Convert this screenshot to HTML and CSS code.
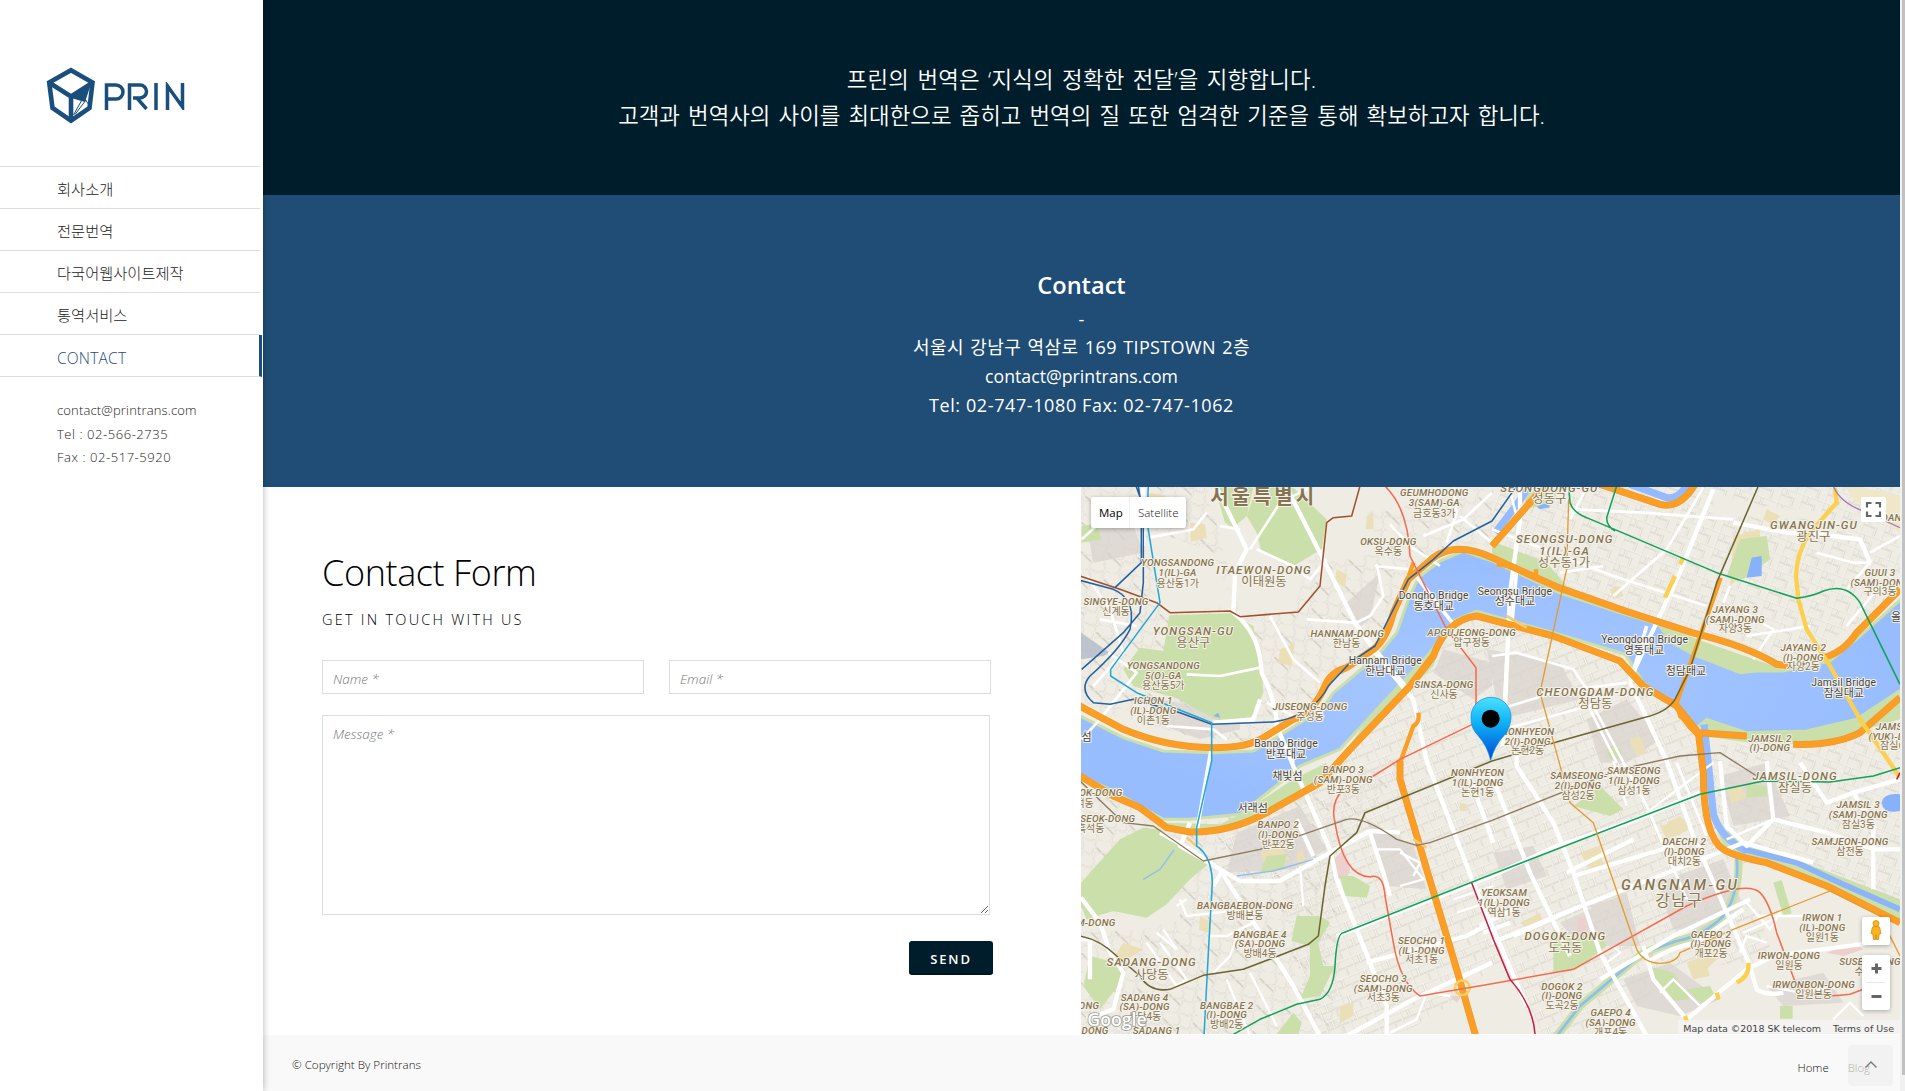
FILE: index.html
```html
<!DOCTYPE html>
<html lang="ko">
<head>
<meta charset="utf-8">
<title>PRIN - Contact</title>
<link rel="stylesheet" href="styles.css">
</head>
<body>
<div class="page">
<aside class="sidebar">
  <a class="logo" href="#">
    <svg width="50" height="58" viewBox="0 0 50 58" fill="none" stroke="#1a4e7c" stroke-width="4.6" stroke-linejoin="miter">
      <path d="M25 3.2L46.5 15.5L43.5 41L25 53.6L6.500 41L3.200 15.500Z"/>
      <path d="M3 15.500L25 29.500L47 15.500M25 29V54"/>
      <path d="M25 29L45 17L39 35L25 31Z" fill="#1a4e7c" stroke="none"/>
      <path d="M37 31L27.500 48M40 33L29 47.500M39 32l4 6" stroke-width="1"/>
    </svg>
    <svg class="wordmark" width="82" height="28" viewBox="0 0 82 28" fill="none" stroke="#1a4e7c" stroke-width="3.5">
      <path d="M2.500 28V3H12a7 7 0 0 1 0 14H3M25.500 28V3H36a6.500 6.500 0 0 1 0 13H29M33 16L42.500 27M52 1V28M63.500 28V4L78.500 25V1"/>
    </svg>
  </a>
  <nav class="menu">
    <a href="#">회사소개</a>
    <a href="#">전문번역</a>
    <a href="#">다국어웹사이트제작</a>
    <a href="#">통역서비스</a>
    <a href="#" class="active">CONTACT</a>
  </nav>
  <div class="side-info"><p class="mail">contact@printrans.com</p><p>Tel : 02-566-2735</p><p>Fax : 02-517-5920</p></div>
</aside>
<main class="content">
  <section class="hero">
    <p class="h1">프린의 번역은 ‘지식의 정확한 전달’을 지향합니다.</p>
    <p class="h2">고객과 번역사의 사이를 최대한으로 좁히고 번역의 질 또한 엄격한 기준을 통해 확보하고자 합니다.</p>
  </section>
  <section class="contact">
    <h2>Contact</h2>
    <p class="dash">-</p>
    <p class="addr">서울시 강남구 역삼로 169 TIPSTOWN 2층</p>
    <p class="email">contact@printrans.com</p>
    <p class="tel">Tel: 02-747-1080 Fax: 02-747-1062</p>
  </section>
  <section class="split">
    <form class="form">
      <h3>Contact Form</h3>
      <p class="sub">GET IN TOUCH WITH US</p>
      <div class="row"><input type="text" placeholder="Name *"><input type="text" placeholder="Email *"></div>
      <textarea placeholder="Message *"></textarea>
      <button type="button">SEND</button>
    </form>
    <div class="map">
      <svg class="canvas" width="819" height="547" viewBox="3 3 2457 1641">
        <defs>
          <pattern id="gs" width="74" height="52" patternUnits="userSpaceOnUse" patternTransform="rotate(-22)"><path d="M0 1H74M0 26H74M1 0V52M25 0V26M50 26V52" stroke="#cbc5b9" stroke-width="5.500" fill="none"/><path d="M0 1H74M0 26H74M1 0V52M25 0V26M50 26V52" stroke="#fbfaf6" stroke-width="2.800" fill="none"/></pattern>
          <pattern id="gn" width="66" height="48" patternUnits="userSpaceOnUse" patternTransform="rotate(20)"><path d="M0 1H66M0 24H40M1 0V48M22 0V24M44 20V48" stroke="#cbc5b9" stroke-width="5.500" fill="none"/><path d="M0 1H66M0 24H40M1 0V48M22 0V24M44 20V48" stroke="#fbfaf6" stroke-width="2.800" fill="none"/></pattern>
          <pattern id="gw" width="90" height="80" patternUnits="userSpaceOnUse" patternTransform="rotate(8)"><path d="M0 10Q40 -8 90 10M0 50Q50 30 90 50M20 0Q5 40 20 80M60 0Q80 40 60 80M20 28L64 60" stroke="#d0cabe" stroke-width="4.500" fill="none"/><path d="M0 10Q40 -8 90 10M0 50Q50 30 90 50M20 0Q5 40 20 80M60 0Q80 40 60 80" stroke="#faf9f5" stroke-width="2.500" fill="none"/></pattern>
          <linearGradient id="pin" x1="0" y1="0" x2="0" y2="1"><stop offset="0" stop-color="#4be0ff"/><stop offset=".4" stop-color="#0fb2f5"/><stop offset="1" stop-color="#0048d8"/></linearGradient>
          <radialGradient id="wat"><stop offset="0" stop-color="#a6c8ff"/><stop offset="1" stop-color="#98bdff"/></radialGradient>
        </defs>
        <rect width="2460" height="1650" fill="#efece4"/>
        <!-- street grids -->
        <path fill="url(#gw)" d="M0 0H380L480 380L640 380L720 100L980 60L1236 0V180L1100 180L960 300L880 490L540 770L330 750L0 660ZM0 900L300 1030L1000 800L760 1120L800 1650H0Z"/>
        <path fill="url(#gn)" d="M1236 0H2460V330L2130 540L1236 230ZM1860 1560L1900 780L2460 700V1280L1900 1080Z"/>
        <path fill="url(#gs)" d="M420 1030L780 830L1160 400L1640 500L1850 740L1880 1020L2000 1110L2080 1420L1800 1450L1560 1650H700L600 1200L430 1190Z"/>
        <path fill="#efece4" d="M1236 1440L1150 1530L960 1650H1236L1380 1645L1290 1480ZM0 1250L100 1290L300 1230L300 1300L190 1330L0 1340ZM210 130L400 200L460 360L270 380L230 340ZM720 100L860 60L900 200L740 230ZM1900 20L2050 60L2240 80L2220 100L1900 90ZM1930 1130L2200 1180L2350 1290L2000 1260Z"/>
        <!-- dense blocks -->
        <g fill="#d9d3ce" opacity=".7">
          <path d="M240 640L480 690V730L360 760L200 700ZM20 120L150 90L190 200L40 230ZM800 350L900 260L870 400L830 430ZM1090 490L1236 530V600L1180 640L1060 560Z"/>
          <path d="M470 1040L660 960L740 1090L640 1150L440 1160ZM1220 490L1440 530L1500 640L1260 700ZM1520 700L1640 640L1740 760L1640 830L1560 830ZM1440 1310L1640 1220L1680 1380L1500 1380ZM1530 1260L1630 1230L1650 1300L1560 1320ZM1730 1190L1930 1120L1990 1260L1880 1330L1780 1330ZM860 1000L1000 1080L1040 1210L920 1200Z"/>
          <path d="M1920 870L2060 830L2130 990L1960 1020ZM2060 1500L2230 1460L2290 1550L2110 1560ZM1240 1100L1360 1080L1400 1170L1280 1210ZM1630 1480L1770 1430L1920 1540L1800 1590L1670 1560ZM1280 290L1430 260L1460 320L1340 310Z"/>
        </g>
        <!-- amenities -->
        <g fill="#eadfb7">
          <path d="M330 110l45 5 5 40-48 12zM210 20l50 10-20 45-40-20zM600 490l45-20-10 70-40-10zM860 90l20-10v50l-22 0zM770 250l30 15-5 40-30-20zM90 1430l40-60 60 20-80 50zM360 1290l30 15-5 35-28-8zM540 1100l60-20 30 40-70 20zM650 1100l20-5 5 40-22 2zM1760 1010l40-20 30 30-35 30zM1500 1100l60-20 10 60-40 10zM1740 1020l50-15 20 35-50 20zM1820 1430l50-20 20 60-50 10zM1940 910l40-15 20 40-45 15zM1960 150l80-20 0 90-90 80zM1830 1360l80-10 0 70-40 40zM1650 760l30-10 20 50-30 10zM1590 310l30-10 10 30-30 10zM1140 950l20 5v20h-20zM1320 1310l60-30 10 30-40 30zM780 1560l40-10v40l-40 20zM2060 70l40 20-20 30-30-20z"/>
        </g>
        <g fill="#ecd0cd"><path d="M763 1120L790 1090L810 1140L800 1190L765 1170ZM1490 1300l25-8 5 60-25 8zM1690 1390l25-8 5 30-25 8zM2240 1400l80-30 30 20-60 20zM1110 1530h35l-15 20z"/></g>
        <!-- parks -->
        <g fill="#cadfa9">
          <path d="M530 5H640L740 100L725 190L640 240L545 200L530 140L500 90ZM405 5H520L500 90L460 125L435 110ZM268 388L450 382L520 420L545 540L550 620L520 690L430 710L330 660L300 640L160 600L130 550L180 485L250 495ZM5 120L50 115L65 160L5 170Z"/>
          <path d="M3 1190L120 1060L190 1025L240 1030L330 1090L390 1130L330 1180L260 1255L200 1295L100 1275L20 1300L3 1260ZM650 1290L720 1290L750 1310L715 1370L730 1440L765 1440L720 1530L660 1540L690 1470L690 1380L635 1365ZM780 1170L820 1170L870 1200L860 1235L795 1230ZM30 1410L110 1430L130 1480L60 1570L10 1500ZM590 1644L640 1580L665 1610L655 1644Z"/>
          <path d="M1236 165L1400 230L1460 300L1300 270L1236 235ZM1330 20L1440 5L1410 60L1340 65ZM1700 400L1800 440L1880 470L2110 550L1990 560L1850 510L1760 470ZM1875 700L2010 730L2200 735L2460 620V700L2200 775L2010 770L1870 750ZM1480 960L1560 900L1630 970L1590 990ZM1980 160L2060 150L2070 220L1990 280L1940 270ZM1420 1330L1480 1360L1560 1340L1580 1380L1490 1450L1420 1460ZM1700 1440L1780 1460L1830 1540L1770 1545L1730 1490ZM1820 1510L1890 1500L1910 1540L1860 1550ZM1910 1025L1940 1035L2000 1080L2120 1110L2460 1240V1310L2260 1200L2000 1120L1930 1080ZM2000 895L2060 900L2060 930L2000 935ZM2080 1190l25-8 30 100-25 8zM2100 1560h38v38h-38zM560 1110L620 1105L610 1150L540 1160ZM1590 780q30 0 35 20t-30 20q-25-20-5-40zM1015 500L1100 430L1060 540L990 610L820 790L780 815Z"/>
        </g>
        <path fill="#efe7c8" d="M2290 -10L2460 30V140L2320 40Z"/>
        <!-- green river banks and water -->
        <path fill="#cadfa9" d="M250 1010L420 1015L480 985L640 880L740 830L720 880L500 1020L330 1040ZM1880 490L2050 560L2110 570L1980 570L1870 520Z"/>
        <path fill="url(#wat)" stroke="#cadfa9" stroke-width="9" d="M-20 680L130 755L250 795L400 800L520 795L590 755L660 710L725 670L760 620L820 570L900 500L950 440L985 340L1015 275L1080 225L1150 195L1236 225L1436 320L1636 385L1736 415L1760 450L1850 510L1990 555L2110 555L2250 525L2340 450L2480 325V600L2330 700L2180 735L2000 740L1880 700L1850 725L1780 655L1690 590L1636 505L1440 445L1240 390L1190 375L1120 405L1050 500L900 660L780 790L660 840L600 890L480 985L330 1000L250 1000L180 960L100 915L-20 860Z"/>
        <path fill="none" stroke="#94bbff" stroke-width="22" d="M1246 140L1315 50L1350 -5M1650 -5L1760 35Q1800 40 1820 -5M1872 715L1884 825L1900 985Q1925 1060 2000 1095"/>
        <path fill="none" stroke="#8bb4fb" stroke-width="17" d="M1990 1090L2150 1130L2290 1195L2460 1270"/>
        <path fill="none" stroke="#c8dfa8" stroke-width="24" d="M1975 1120Q1980 1220 1930 1290Q1870 1350 1790 1365L1690 1400L1500 1560L1430 1650"/>
        <path fill="none" stroke="#8fbdf0" stroke-width="8" d="M1970 1115Q1980 1220 1930 1290Q1870 1350 1790 1365L1690 1400L1500 1560L1430 1650"/>
        <path fill="none" stroke="#8fbdf0" stroke-width="4" d="M190 1180L240 1150L282 1092M470 1170L580 1155L700 1120"/>
        <path fill="#87b1fb" d="M2015 215L2045 210V270L2000 275ZM2405 950Q2410 920 2460 925V975Q2410 985 2405 950ZM1370 62L1400 50L1410 64L1380 70ZM400 690L415 680L420 695Z"/>
        <path fill="#cadfa9" d="M1730 450L1900 505L2110 550L1980 565L1840 510Z"/>
        <path fill="#a9b4c4" opacity=".7" d="M3 440L90 500L70 510L3 520Z"/>
        <!-- white arterial roads -->
        <g fill="none" stroke="#fff" stroke-width="8" stroke-linejoin="round">
          <path d="M5 160L60 110L165 70M20 270L90 370L130 500L40 600M60 400L170 420M85 500L170 560L60 700L5 760M205 155L340 130L380 80M480 130L420 120M510 190L600 50L690 5M530 190L640 240L690 280L740 220M320 565L420 570L540 545M570 390L640 520L720 590M560 650L640 690M930 115L990 180L1080 240M1120 5L1130 80L1100 170M885 240L990 250M890 235L910 330L870 390L830 410M820 410L680 400M1030 150L1150 100L1236 20M260 720L400 730L440 760M1236 170L1140 90"/>
          <path d="M1236 130L1600 270L1880 360M1460 90L1480 70L1690 80L1960 100M1600 330L1760 190L1870 5M1520 5L1470 100M1280 -20L1310 90M1440 260L1570 240M2000 450L2190 420M1950 300L1930 350M2210 200L2320 230L2370 230L2300 310M2020 520L2080 430L1990 380M2370 200L2460 150M2300 420L2400 300"/>
          <path d="M1236 510L1310 500L1480 550L1520 610M1236 680L1290 660L1420 620L1640 590M1540 660L1700 960L1820 1240M1280 500L1270 690M1500 610L1610 830M1236 740L1560 650M1790 830L1880 1050"/>
        </g>
        <g fill="none" stroke="#fff" stroke-width="13" stroke-linejoin="round">
          <path d="M410 5L500 190L465 260L460 380M620 5L740 240L820 400L900 520L1000 640L1040 825L1180 1190L1340 1560M460 380Q540 440 545 560Q590 650 590 720L640 840L750 1090M540 640L520 700L400 710M190 5V180M1320 0V100L1290 320L1270 780M1650 590L1760 825L1840 1050L2010 1440L2030 1510Q2060 1530 2110 1520M1900 10L1800 260L1650 580M1960 110L2120 140L2260 150L2340 160L2370 230"/>
          <path d="M240 1040L330 1090L420 1150L480 1185H600L750 1100L870 1035L960 1040M420 1150L540 1340L640 1500L720 1650M870 1040L910 1160L930 1230M750 1090L770 1180L870 1430L920 1560V1650M800 1650L1000 1540L1236 1430M770 1350L1236 1170L1430 1080L1670 1000L1860 920M860 1430L1160 1350L1236 1310M1236 1370L1480 1270L1840 1130L1990 1070L2200 1130M330 1010L300 1080L420 1150M650 1000L700 1110M400 1200L430 1150"/>
          <path d="M1310 800V840L1420 1010L1480 1160L1560 1400L1700 1650M1236 870L1350 1160L1470 1410M1480 1170L1780 1080M1560 1480L1780 1350L2010 1240M1700 1430Q1780 1380 1850 1370L1990 1270M1690 1380L1720 1480L1820 1600L2000 1450M1920 825L1940 1020L2000 1080L2080 1000L2060 825M2080 1000L2240 1040L2380 1090L2460 1090M2160 830L2240 950L2320 920L2460 880M2320 920L2380 1020V1210M1200 1320L1300 1270M1210 1340L1290 1310M3 1235L60 1310L90 1400L130 1460L100 1570L20 1600M3 1360H30V1480M1160 850L1240 1070M2380 1370L2080 1410L2000 1450M1460 1160L1660 1060M1480 1270L1300 1350"/>
        </g>
        <g fill="none" stroke="#fff" stroke-width="7">
          <path d="M300 1240L320 1290L500 1270L540 1290M320 1240L290 1260M230 1340L290 1390L250 1330M200 1370L290 1500L320 1480L240 1370M390 1350H440L520 1310M400 1460L450 1410L480 1330M440 1480L510 1650M510 1460L590 1620M660 1140L670 1260M880 1090L960 1090L1030 1180L960 1200M960 1100L1020 1130L1000 1170M1120 1240L1240 1200M1130 1280L1250 1240M1900 830L1700 980M1940 1060L2080 1000M1640 960L1600 825M1580 1430L1620 1400L1600 1380M1740 1520L1780 1480L1860 1560M2000 1250L2070 1330L2100 1280M1990 1340L2080 1300M2030 1290L2200 1290M1980 1400L2000 1350L2060 1370M2060 1500L2160 1520L2290 1500M2260 1600L2310 1550L2350 1590M930 1640L1010 1600L1040 1520L1110 1530"/>
        </g>
        <!-- bridges -->
        <g fill="none" stroke="#fff" stroke-width="11"><path d="M640 830L590 720M820 410L985 610M1000 260L1140 440M1310 250L1295 420M1700 420L1650 590M395 780L350 1040"/></g>
        <!-- highways -->
        <path fill="none" stroke="#f1982a" stroke-width="21" stroke-linejoin="round" d="M-5 658L130 730Q260 785 400 785Q500 785 550 755L640 700Q700 680 735 600Q750 560 800 545L880 490Q920 460 940 380L985 280L1060 215Q1130 165 1236 215L1436 305L1636 375L1836 440Q2000 480 2090 535L2130 540M2230 515Q2290 500 2330 440L2460 310M-5 867L100 930L180 965L260 1025L330 1038Q450 1040 560 980L720 890L810 790L990 600L1060 510Q1100 400 1190 390L1420 450L1620 525L1690 600L1790 660L1855 740L2000 750M2140 775Q2260 780 2340 740L2460 635M1855 740L1870 860Q1870 1050 1930 1090Q1960 1110 2060 1130L2240 1200L2460 1310M960 825V880L1040 1150L1130 1450L1190 1660M1236 180L1350 50L1400 -5M1560 -5L1740 55Q1800 70 1845 -5"/>
        <path fill="none" stroke="#fa9e25" stroke-width="17" stroke-linejoin="round" d="M-5 658L130 730Q260 785 400 785Q500 785 550 755L640 700Q700 680 735 600Q750 560 800 545L880 490Q920 460 940 380L985 280L1060 215Q1130 165 1236 215L1436 305L1636 375L1836 440Q2000 480 2090 535L2130 540M2230 515Q2290 500 2330 440L2460 310M-5 867L100 930L180 965L260 1025L330 1038Q450 1040 560 980L720 890L810 790L990 600L1060 510Q1100 400 1190 390L1420 450L1620 525L1690 600L1790 660L1855 740L2000 750M2140 775Q2260 780 2340 740L2460 635M1855 740L1870 860Q1870 1050 1930 1090Q1960 1110 2060 1130L2240 1200L2460 1310M960 825V880L1040 1150L1130 1450L1190 1660M1236 180L1350 50L1400 -5M1560 -5L1740 55Q1800 70 1845 -5"/>
        <path fill="none" stroke="#fa9e25" stroke-width="13" d="M1922 275L1850 480L1790 650L1800 690L1855 740M1780 640Q1800 700 1850 745M980 290L1000 230M770 550L730 620M1250 235L1310 243M1368 250V275M1015 680Q1020 710 1000 720L960 830"/>
        <g fill="none" stroke="#fcd04f" stroke-width="13"><path d="M2265 5L2270 50L2190 140Q2150 200 2148 270L2155 340L2180 430L2250 540L2340 700L2430 830L2460 875M1785 270L1755 335M1810 215L1800 235M2005 1430Q2010 1470 1970 1490M1910 1520L1916 1540M1815 1590L1822 1610"/></g>
        <circle cx="1147" cy="1505" r="22" fill="none" stroke="#f8ce69" stroke-width="8"/>
        <path fill="none" stroke="#f5cb75" stroke-width="8" d="M1000 1060L1040 1085M320 1055L350 1080M1280 390L1340 425"/>
        <!-- subway lines -->
        <g fill="none" stroke-width="4.600" stroke-linejoin="round">
          <path stroke="#a0522d" d="M0 270L120 310L230 350L270 380L450 375L480 392L655 378L720 300L740 110L760 95L815 90L840 0"/>
          <path stroke="#2461a0" d="M168 0L190 60V290L180 380L130 440L5 550M175 0L184 60V230L105 305M0 283L100 310Q170 340 150 430Q120 490 30 570Q-5 610 40 650L90 655L160 640L300 680L395 715L580 708Q700 690 745 600L810 530L885 480L950 350L985 280L1060 220L1120 165L1236 105L1310 0"/>
          <path stroke="#23a7d6" d="M205 0L200 100L240 350L92 550V570L170 620L395 710V825L350 1025V1080Q395 1110 397 1190L385 1400L372 1650"/>
          <path stroke="#f36c4f" d="M915 0Q985 70 990 210L1100 430L1188 545V710L960 820L880 870L790 910Q750 950 765 1010Q790 1170 870 1173Q910 1160 915 1230L940 1370Q960 1490 1020 1530L1236 1493L1480 1450L1820 1260Q2000 1180 2040 1220Q2070 1250 2090 1340L2150 1500Q2200 1540 2310 1525L2350 1510"/>
          <path stroke="#12a05b" d="M1466 0L1470 50Q1480 80 1520 95L1910 260L2150 337Q2200 330 2230 315Q2300 290 2340 350L2460 595M1610 0L1580 95Q1580 120 1605 135M460 1645L540 1600L650 1555L720 1540Q760 1520 765 1440Q770 1340 790 1340L1236 1165L1480 1070L1860 925L2050 885L2250 888L2380 870L2460 845"/>
          <path stroke="#6b6530" d="M2035 0L1910 290L1830 550L1785 640Q1760 680 1690 695L1440 765L1236 825L855 980L830 1040L750 1110L735 1200L715 1350L685 1375L490 1450L370 1468L270 1510Q210 1520 180 1470L110 1410Q60 1360 0 1350"/>
          <path stroke="#8c7a60" stroke-width="4" d="M0 885L130 1010L220 1020L370 1125L540 1090L800 1000Q850 990 950 1060L1010 1078L1050 1070L1236 1003L1620 850L1800 810L1920 800L2030 870"/>
          <path stroke="#c51f49" d="M1175 1190L1240 1360L1290 1480Q1360 1560 1365 1645M2460 860L2450 880"/>
          <path stroke="#e49a31" stroke-width="4" d="M1466 40L1460 250L1380 620L1435 820L1470 950L1540 1010L1670 1390Q1690 1430 1740 1432Q1790 1430 1800 1400L1960 1330L2250 1215L2400 1290L2460 1410"/>
          <path stroke="#a57ab9" stroke-width="4" d="M2260 0Q2280 50 2350 75L2460 125"/>
        </g>
        <!-- place labels -->
        <g class="lbl">
          <text x="1063" y="31">GEUMHODONG</text><text x="1063" y="61">3(SAM)-GA</text><text class="k" x="1063" y="92">금호동3가</text>
          <text x="925" y="178">OKSU-DONG</text><text class="k" x="925" y="208">옥수동</text>
          <text x="293" y="241">YONGSANDONG</text><text x="293" y="271">1(IL)-GA</text><text class="k" x="293" y="302">용산동1가</text>
          <text x="108" y="358">SINGYE-DONG</text><text class="k" x="108" y="388">신계동</text>
          <text x="250" y="549">YONGSANDONG</text><text x="250" y="579">5(O)-GA</text><text class="k" x="250" y="610">용산동5가</text>
          <text x="220" y="655">ICHON 1</text><text x="220" y="685">(IL)-DONG</text><text class="k" x="220" y="714">이촌1동</text>
          <text x="690" y="672">JUSEONG-DONG</text><text class="k" x="690" y="703">주성동</text>
          <text x="802" y="453">HANNAM-DONG</text><text class="k" x="800" y="483">한남동</text>
          <text x="1175" y="451">APGUJEONG-DONG</text><text class="k" x="1175" y="481">압구정동</text>
          <text x="1092" y="607">SINSA-DONG</text><text class="k" x="1092" y="637">신사동</text>
          <text x="1343" y="746">NONHYEON</text><text x="1343" y="776">2(I)-DONG</text><text class="k" x="1343" y="805">논현2동</text>
          <text x="1966" y="380">JAYANG 3</text><text x="1966" y="410">(SAM)-DONG</text><text class="k" x="1966" y="439">자양3동</text>
          <text x="2170" y="494">JAYANG 2</text><text x="2170" y="524">(I)-DONG</text><text class="k" x="2170" y="553">자양2동</text>
          <text x="2400" y="269">GUUI 3</text><text x="2400" y="299">(SAM)-DONG</text><text class="k" x="2400" y="328">구의3동</text>
          <text x="2070" y="767">JAMSIL 2</text><text x="2070" y="796">(I)-DONG</text><text x="2440" y="731">JAMSIL</text><text x="2450" y="761">(YUK)-DONG</text><text class="k" x="2450" y="788">잠실6동</text><text x="2445" y="106">DANG</text>
          <text x="790" y="862">BANPO 3</text><text x="790" y="892">(SAM)-DONG</text><text class="k" x="790" y="921">반포3동</text>
          <text x="595" y="1027">BANPO 2</text><text x="595" y="1057">(I)-DONG</text><text class="k" x="595" y="1086">반포2동</text>
          <text x="45" y="931">SEOK-DONG</text><text class="k" x="0" y="962">흑석동</text><text x="45" y="1008">HEUKSEOK-DONG</text><text class="k" x="32" y="1039">흑석동</text>
          <text x="1193" y="871">NONHYEON</text><text x="1193" y="901">1(IL)-DONG</text><text class="k" x="1193" y="930">논현1동</text>
          <text x="495" y="1270">BANGBAEBON-DONG</text><text class="k" x="495" y="1299">방배본동</text>
          <text x="540" y="1355">BANGBAE 4</text><text x="540" y="1384">(SA)-DONG</text><text class="k" x="540" y="1413">방배4동</text>
          <text x="440" y="1568">BANGBAE 2</text><text x="440" y="1597">(I)-DONG</text><text class="k" x="440" y="1626">방배2동</text>
          <text x="194" y="1544">SADANG 4</text><text x="194" y="1573">(SA)-DONG</text><text class="k" x="194" y="1603">사당4동</text><text x="230" y="1644">SADANG 1</text>
          <text x="27" y="1321">NAM-DONG</text><text x="17" y="1568">DONG</text><text x="45" y="1644">DONG</text>
          <text x="1025" y="1375">SEOCHO 1</text><text x="1025" y="1404">(IL)-DONG</text><text class="k" x="1025" y="1432">서초1동</text>
          <text x="910" y="1487">SEOCHO 3</text><text x="910" y="1517">(SAM)-DONG</text><text class="k" x="910" y="1545">서초3동</text>
          <text x="1272" y="1231">YEOKSAM</text><text x="1272" y="1261">1(IL)-DONG</text><text class="k" x="1272" y="1291">역삼1동</text>
          <text x="1496" y="880">SAMSEONG-</text><text x="1494" y="910">2(I)-DONG</text><text class="k" x="1494" y="940">삼성2동</text>
          <text x="1662" y="865">SAMSEONG</text><text x="1662" y="895">1(IL)-DONG</text><text class="k" x="1662" y="925">삼성1동</text>
          <text x="1813" y="1078">DAECHI 2</text><text x="1813" y="1108">(I)-DONG</text><text class="k" x="1813" y="1137">대치2동</text>
          <text x="2335" y="967">JAMSIL 3</text><text x="2335" y="997">(SAM)-DONG</text><text class="k" x="2335" y="1026">잠실3동</text>
          <text x="2310" y="1078">SAMJEON-DONG</text><text class="k" x="2310" y="1108">삼전동</text>
          <text x="2227" y="1306">IRWON 1</text><text x="2227" y="1336">(IL)-DONG</text><text class="k" x="2227" y="1365">일원1동</text>
          <text x="2127" y="1420">IRWON-DONG</text><text class="k" x="2127" y="1450">일원동</text>
          <text x="2201" y="1507">IRWONBON-DONG</text><text class="k" x="2201" y="1536">일원본동</text>
          <text x="2370" y="1438">SUSEO-DONG</text><text class="k" x="2365" y="1467">수서동</text>
          <text x="1893" y="1355">GAEPO 2</text><text x="1893" y="1384">(I)-DONG</text><text class="k" x="1893" y="1413">개포2동</text>
          <text x="1592" y="1591">GAEPO 4</text><text x="1592" y="1621">(SA)-DONG</text><text class="k" x="1592" y="1650">개포4동</text>
          <text x="1446" y="1511">DOGOK 2</text><text x="1446" y="1540">(I)-DONG</text><text class="k" x="1446" y="1569">도곡2동</text>
        </g>
        <g class="lbl mid">
          <text x="552" y="263">ITAEWON-DONG</text><text class="k" x="552" y="299">이태원동</text>
          <text x="340" y="446">YONGSAN-GU</text><text class="k" x="340" y="482">용산구</text>
          <text x="1408" y="17">SEONGDONG-GU</text><text class="k" x="1408" y="50">성동구</text>
          <text x="1454" y="170">SEONGSU-DONG</text><text x="1454" y="206">1(IL)-GA</text><text class="k" x="1452" y="243">성수동1가</text>
          <text x="2202" y="129">GWANGJIN-GU</text><text class="k" x="2200" y="165">광진구</text>
          <text x="1546" y="630">CHEONGDAM-DONG</text><text class="k" x="1546" y="666">청담동</text>
          <text x="2145" y="881">JAMSIL-DONG</text><text class="k" x="2145" y="918">잠실동</text>
          <text x="215" y="1441">SADANG-DONG</text><text class="k" x="215" y="1478">사당동</text>
          <text x="1456" y="1362">DOGOK-DONG</text><text class="k" x="1456" y="1398">도곡동</text>
        </g>
        <g class="lbl big"><text x="1800" y="1212">GANGNAM-GU</text><text class="k" x="1798" y="1261">강남구</text></g>
        <g class="lbl city"><text class="k" x="551" y="54">서울특별시</text></g>
        <g class="lbl bridge">
          <text x="1061" y="340">Dongho Bridge</text><text class="k" x="1061" y="372">동호대교</text>
          <text x="1305" y="326">Seongsu Bridge</text><text class="k" x="1305" y="358">성수대교</text>
          <text x="916" y="535">Hannam Bridge</text><text class="k" x="916" y="567">한남대교</text>
          <text x="1694" y="472">Yeongdong Bridge</text><text class="k" x="1692" y="504">영동대교</text><text class="k" x="1818" y="567">청담대교</text>
          <text x="2291" y="601">Jamsil Bridge</text><text class="k" x="2291" y="633">잠실대교</text>
          <text x="618" y="784">Banpo Bridge</text><text class="k" x="618" y="815">반포대교</text>
          <text class="k" x="622" y="883">채빛섬</text><text class="k" x="518" y="979">서래섬</text><text class="k" x="20" y="765">섬</text><text class="k" x="2448" y="405">올</text>
        </g>
        <text class="google" x="22" y="1620">Google</text>
        <!-- office marker -->
        <path fill="url(#pin)" stroke="#0a8ee0" stroke-width="2" d="M1232 823Q1222 780 1195 750Q1171 725 1173 692A60 58 0 0 1 1293 692Q1293 725 1271 750Q1243 780 1232 823Z"/>
        <circle cx="1232" cy="698" r="27" fill="#000"/>
      </svg>
      <div class="types"><b>Map</b><span>Satellite</span></div>
      <div class="ctl full"><svg width="25" height="25" viewBox="0 0 25 25" fill="none" stroke="#666" stroke-width="2.200"><path d="M6 10.500V6H10.500M14.500 6H19V10.500M19 14.500V19H14.500M10.500 19H6V14.500"/></svg></div>
      <div class="ctl peg"><svg width="28" height="28" viewBox="0 0 28 28"><path fill="#fbb41b" stroke="#c98a1b" stroke-width=".8" d="M10.500 10Q14 8.500 17.500 10L19 16.500L17.200 17L16.500 22.500H14.500V18H13.500V22.500H11.500L10.800 17L9 16.500Z"/><circle cx="14" cy="6.600" r="3" fill="#fbb41b" stroke="#c98a1b" stroke-width=".8"/></svg></div>
      <div class="ctl zoom"><svg width="28" height="55" viewBox="0 0 28 55"><path d="M9.500 13.500H19.500M14.500 8.500V18.500M9.500 41.500H19.500" stroke="#666" stroke-width="3"/><path d="M4 27.500H23" stroke="#e6e6e6"/></svg></div>
      <div class="credit"><span>Map data ©2018 SK telecom</span><span class="terms">Terms of Use</span></div>
    </div>
  </section>
  <footer class="footer">
    <span class="copy">© Copyright By Printrans</span>
    <div class="links"><a class="home" href="#">Home</a><a class="blog" href="#">Blog</a></div>
    <div class="top"><svg width="45" height="41" viewBox="0 0 45 41" fill="none" stroke="#777" stroke-width="1.400"><path d="M17.500 22.500L23 17L28.500 22.500"/></svg></div>
  </footer>
</main>
<div class="scroll"><div class="thumb"></div></div>
</div>
</body>
</html>
```
FILE: styles.css
```css
* { box-sizing: border-box; }
body { margin: 0; overflow: hidden; background: #fff; font-family: "Open Sans", "Noto Sans CJK KR", sans-serif; font-weight: 300; color: #333; }
p, h2, h3 { margin: 0; white-space: nowrap; }
a { color: inherit; text-decoration: none; }
.page { display: flex; width: 1905px; height: 1091px; }
.sidebar { width: 263px; position: relative; z-index: 2; background: #fff; box-shadow: 0 0 7px rgba(0,0,0,.3); }
.logo { display: flex; height: 166px; padding: 67px 0 0 46px; }
.wordmark { margin: 15px 0 0 8px; }
.menu { display: flex; flex-direction: column; border-top: 1px solid #ddd; width: 260px; }
.menu a { height: 42px; width: 260px; padding-left: 57px; border-bottom: 1px solid #ddd; font-size: 15.300px; line-height: 44px; color: #222; }
.menu a.active { width: 262px; border-right: 3px solid #1a4e7c; color: #1a4e7c; font-size: 15.500px; line-height: 46px; letter-spacing: .2px; }
.side-info { padding: 22px 0 0 57px; font-size: 13px; line-height: 23.500px; color: #222; letter-spacing: .55px; }
.side-info .mail { letter-spacing: .15px; }
.content { width: 1637px; }
.hero { height: 195px; padding-top: 62px; background: #001d2b; color: #fff; text-align: center; font-size: 22.400px; line-height: 36px; word-spacing: 2.300px; font-weight: 350; }
.hero .h1 { letter-spacing: .18px; }
.contact { height: 292px; padding-top: 70px; background: #204d76; color: #fff; text-align: center; font-size: 18px; line-height: 29px; font-weight: 400; }
.contact h2 { font-size: 23.600px; line-height: 40px; font-weight: 600; }
.contact .dash { line-height: 28px; }
.contact .addr { letter-spacing: .35px; word-spacing: 1.500px; }
.contact .email { font-size: 17.700px; }
.contact .tel { letter-spacing: .6px; }
.split { display: flex; height: 548px; }
.form { width: 818px; padding: 60px 0 0 59px; display: flex; flex-direction: column; background: #fff; }
.form h3 { font-size: 36px; line-height: 52px; font-weight: 300; color: #000; letter-spacing: -.4px; }
.form .sub { margin-top: 10px; font-size: 14.500px; line-height: 22px; letter-spacing: 2.250px; color: #000; }
.row { display: flex; gap: 25px; margin-top: 29px; }
input, textarea { width: 322px; height: 34px; border: 1px solid #ddd; padding: 4px 10px 0; font: italic 300 13.500px "Open Sans", sans-serif; background: #fff; outline: none; }
textarea { width: 668px; height: 200px; margin-top: 21px; padding-top: 9px; }
::placeholder { color: #777; opacity: 1; }
.form button { width: 84px; height: 34px; margin: 26px 0 0 587px; border: 0; border-bottom: 2px solid #001520; border-radius: 3px; background: #001d2b; color: #fff; font: 600 13px/34px "Open Sans", sans-serif; letter-spacing: 1.900px; padding: 1px 0 0; }
.map { position: relative; width: 819px; height: 547px; overflow: hidden; }
.canvas { display: block; }
.lbl { font: italic 500 29.500px Roboto, "Noto Sans CJK KR", sans-serif; fill: #85744f; text-anchor: middle; paint-order: stroke; stroke: #f5f2ea; stroke-width: 6px; stroke-linejoin: round; letter-spacing: .8px; }
.lbl .k { font-style: normal; font-weight: 400; font-size: 30px; letter-spacing: 0; }
.mid { font-size: 34.500px; letter-spacing: 3.200px; }
.mid .k { font-size: 37px; }
.big { font-size: 44px; letter-spacing: 7px; }
.big .k { font-size: 48px; letter-spacing: 4px; }
.city .k { font-size: 60px; font-weight: 600; letter-spacing: 9px; }
.bridge { font: 400 31px Roboto, "Noto Sans CJK KR", sans-serif; fill: #444; letter-spacing: .5px; }
.bridge .k { font-size: 33px; }
.google { font: 600 53px "Open Sans", sans-serif; fill: #fff; stroke: #9c9c94; stroke-width: 5px; paint-order: stroke; }
.types { position: absolute; left: 10px; top: 10px; display: flex; width: 95px; height: 31px; background: #fff; box-shadow: 0 1px 4px rgba(0,0,0,.3); font-size: 11.500px; line-height: 32px; color: #222; border-radius: 2px; }
.types b { width: 39px; padding-left: 8px; border-right: 1px solid #eee; font-weight: 400; color: #000; }
.types span { padding-left: 8px; }
.ctl { position: absolute; background: #fff; border-radius: 2px; box-shadow: 0 1px 4px rgba(0,0,0,.3); }
.ctl svg { display: block; }
.full { left: 780px; top: 10px; width: 25px; height: 25px; box-shadow: none; }
.peg { left: 781px; top: 430px; width: 28px; height: 28px; }
.zoom { left: 781px; top: 468px; width: 28px; height: 55px; }
.credit { position: absolute; right: 0; bottom: 0; display: flex; height: 14px; background: rgba(245,245,245,.75); font: 400 9.500px/18px "DejaVu Sans", sans-serif; color: #444; padding: 0 6px 0 5px; white-space: nowrap; }
.credit .terms { margin-left: 12px; }
.footer { height: 56px; background: #f9f9f9; position: relative; display: flex; justify-content: space-between; padding: 20px 30px 0 29px; font-size: 11.600px; line-height: 20px; color: #111; }
.links { display: flex; gap: 19px; padding-top: 3px; font-size: 11.400px; }
.blog { color: #777; }
.top { position: absolute; left: 1585px; top: 10px; width: 45px; height: 41px; background: rgba(235,235,235,.5); border-radius: 4px; }
.scroll { width: 5px; background: #f1f1f1; padding-left: 2px; }
.thumb { height: 1075px; background: #c1c1c1; }
```
